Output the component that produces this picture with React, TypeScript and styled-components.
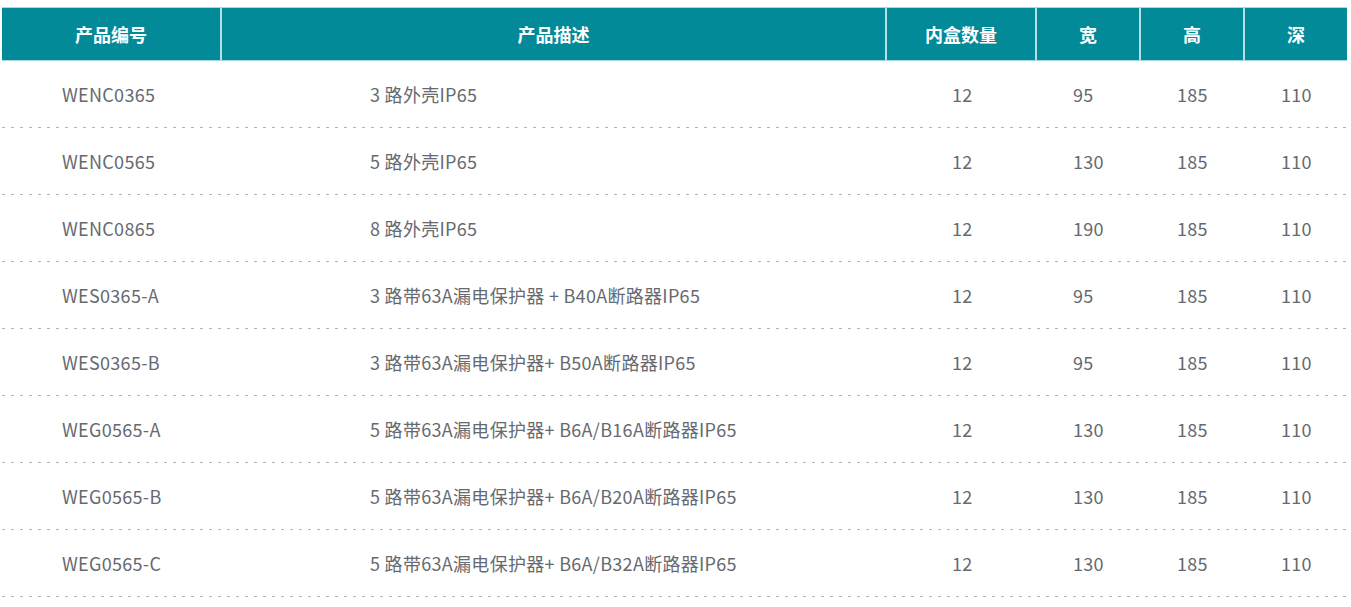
import React from 'react';
import styled, { createGlobalStyle } from 'styled-components';

const GlobalStyle = createGlobalStyle`
  html, body {
    margin: 0;
    padding: 0;
    background: #ffffff;
  }
  body {
    font-family: "Noto Sans CJK SC", "Noto Sans", sans-serif;
  }
`;

const COLUMNS = '220px 665px 150px 104px 104px 1fr';

const Wrapper = styled.div`
  padding: 7px 4px 0 2px;
`;

const HeaderRow = styled.div`
  display: grid;
  grid-template-columns: ${COLUMNS};
  height: 54px;
  background: #038a98;
  border-top: 1px solid #a9d8de;
  border-bottom: 1px solid #a9d8de;
  box-sizing: border-box;
`;

const HeaderCell = styled.div<{ $last?: boolean }>`
  display: flex;
  align-items: center;
  justify-content: center;
  color: #ffffff;
  font-size: 18px;
  font-weight: 700;
  border-right: ${p => (p.$last ? 'none' : '2px solid #b7e0e5')};
`;

const BodyRow = styled.div`
  display: grid;
  grid-template-columns: ${COLUMNS};
  height: 67px;
  box-sizing: border-box;
  padding-bottom: 1px;
  background:
    repeating-linear-gradient(to right, #b3b3b3 0 3px, transparent 3px 9px)
    left bottom / 100% 1px no-repeat;
`;

const BodyCell = styled.div<{ $pad: number }>`
  display: flex;
  align-items: center;
  padding-left: ${p => p.$pad}px;
  color: #666a70;
  font-size: 18px;
  letter-spacing: 0.3px;
  white-space: nowrap;
`;

const headers = ['产品编号', '产品描述', '内盒数量', '宽', '高', '深'];
const pads = [60, 148, 65, 36, 36, 36];

const rows: string[][] = [
  ['WENC0365', '3 路外壳IP65', '12', '95', '185', '110'],
  ['WENC0565', '5 路外壳IP65', '12', '130', '185', '110'],
  ['WENC0865', '8 路外壳IP65', '12', '190', '185', '110'],
  ['WES0365-A', '3 路带63A漏电保护器 + B40A断路器IP65', '12', '95', '185', '110'],
  ['WES0365-B', '3 路带63A漏电保护器+ B50A断路器IP65', '12', '95', '185', '110'],
  ['WEG0565-A', '5 路带63A漏电保护器+ B6A/B16A断路器IP65', '12', '130', '185', '110'],
  ['WEG0565-B', '5 路带63A漏电保护器+ B6A/B20A断路器IP65', '12', '130', '185', '110'],
  ['WEG0565-C', '5 路带63A漏电保护器+ B6A/B32A断路器IP65', '12', '130', '185', '110'],
];

const App = () => {
  return (
    <Wrapper>
      <GlobalStyle />
      <HeaderRow>
        {headers.map((h, i) => (
          <HeaderCell key={h} $last={i === headers.length - 1}>{h}</HeaderCell>
        ))}
      </HeaderRow>
      {rows.map(row => (
        <BodyRow key={row[0]}>
          {row.map((cell, i) => (
            <BodyCell key={i} $pad={pads[i]}>{cell}</BodyCell>
          ))}
        </BodyRow>
      ))}
    </Wrapper>
  );
};

export default App;
